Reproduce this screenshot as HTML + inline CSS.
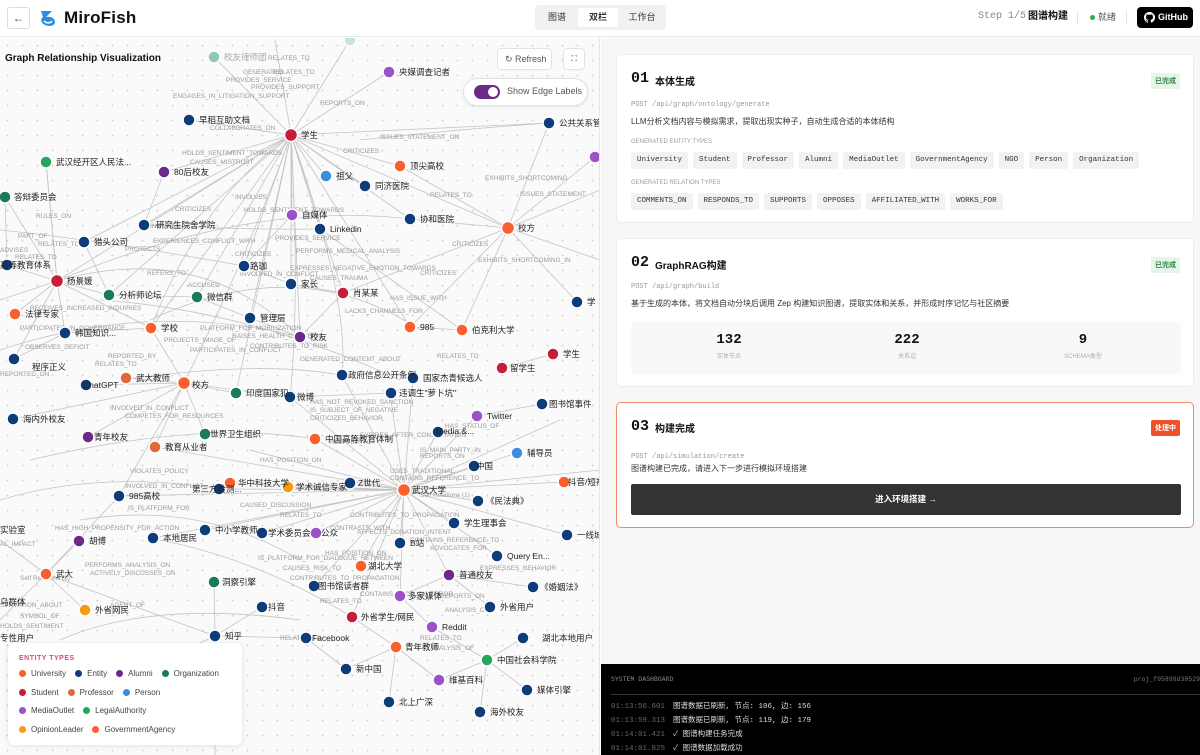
<!DOCTYPE html>
<html><head><meta charset="utf-8">
<style>
*{box-sizing:border-box;margin:0;padding:0}
body{width:1200px;height:755px;overflow:hidden;font-family:"Liberation Sans","Noto Sans CJK SC",sans-serif;background:#fff;color:#111;position:relative}
.hdr{position:absolute;left:0;top:0;width:1200px;height:37px;border-bottom:1px solid #e8e8e8;background:#fff}
.back{position:absolute;left:7px;top:7px;width:23px;height:22px;border:1px solid #ddd;border-radius:3px;font-size:12px;color:#555;text-align:center;line-height:20px}
.logo{position:absolute;left:38px;top:8px}
.brand{position:absolute;left:64px;top:8px;font-size:17px;font-weight:bold;letter-spacing:.2px}
.tabs{position:absolute;left:535px;top:5px;width:131px;height:25px;background:#f1f1f1;border-radius:4px;font-size:9px}
.tabs span{position:absolute;top:3px;height:19px;line-height:19px;text-align:center;width:40px;color:#333}
.tabs .on{background:#fff;border-radius:3px;font-weight:bold}
.step{position:absolute;left:978px;top:10px;line-height:14px;font-family:"Liberation Mono",monospace;font-size:10px;color:#888}
.stepb{position:absolute;left:1028px;top:10px;line-height:14px;font-size:10px;font-weight:bold}
.sep{position:absolute;top:11px;width:1px;height:14px;background:#e3e3e3}
.dot{position:absolute;left:1090px;top:15px;width:5px;height:5px;border-radius:50%;background:#2eaa52}
.ready{position:absolute;left:1098px;top:10px;line-height:14px;font-size:9px;color:#555}
.gh{position:absolute;left:1137px;top:7px;width:56px;height:21px;background:#000;border-radius:4px;color:#fff;font-size:9px;font-weight:bold;line-height:21px;padding-left:21px}
.left{position:absolute;left:0;top:38px;width:600px;height:717px;background-color:#fafafa;background-image:radial-gradient(#d4d4d4 0.8px,transparent 1px);background-size:15px 15px;overflow:hidden;border-right:1px solid #e5e5e5}
.right{position:absolute;left:601px;top:38px;width:599px;height:717px;background:#f7f7f7}
.card{position:absolute;left:15px;width:578px;background:#fff;border:1px solid #ececec;border-radius:5px}
.num{position:absolute;left:14px;font-family:"Liberation Mono",monospace;font-size:15px;font-weight:bold}
.ttl{position:absolute;left:38px;font-size:10px;font-weight:bold}
.badge{position:absolute;right:13px;font-size:7px;padding:3px 4px;border-radius:2px;font-weight:bold}
.api{position:absolute;left:14px;font-family:"Liberation Mono",monospace;font-size:7px;color:#999}
.desc{position:absolute;left:14px;font-size:8px;color:#333}
.sub{position:absolute;left:14px;font-size:6px;color:#999}
.chips{position:absolute;left:14px;display:flex;gap:5px}
.chips span{background:#f2f2f2;border-radius:2px;font-family:"Liberation Mono",monospace;font-size:7.5px;color:#333;padding:4px 6px;height:17px}
.stats{position:absolute;left:14px;top:83px;width:550px;height:52px;background:#f8f8f8;border-radius:3px}
.st{position:absolute;top:10px;width:100px;text-align:center}
.st b{display:block;font-family:"Liberation Mono",monospace;font-size:14px}
.st i{display:block;font-style:normal;font-size:6px;color:#aaa;margin-top:3px}
.dash{position:absolute;left:0;top:626px;width:599px;height:91px;background:#000;color:#ddd;font-family:"Liberation Mono","Noto Sans CJK SC",monospace}
.ln{position:absolute;left:10px;font-size:7.5px}
.ln em{font-style:normal;color:#666;margin-right:8px}
.gtitle{position:absolute;left:5px;top:15px;font-size:10px;font-weight:bold}
.btn{position:absolute;background:#fff;border:1px solid #e2e2e2;border-radius:4px;font-size:9px;color:#555}
.legend{position:absolute;left:8px;top:605px;width:234px;height:102px;background:#fff;border-radius:6px;box-shadow:0 1px 6px rgba(0,0,0,.1);font-size:8px;color:#444}
.legend .h{position:absolute;left:11px;top:12px;font-size:7px;font-weight:bold;color:#e0457b;letter-spacing:.5px}
.lr{position:absolute;left:11px;display:flex;gap:9px}
.lr span:before{content:"";display:inline-block;width:7px;height:7px;border-radius:50%;background:var(--c);margin-right:5px;vertical-align:-1px}
svg text{font-family:"Liberation Sans","Noto Sans CJK SC",sans-serif}
</style></head><body>
<div class="hdr">
<div class="back">←</div>
<svg class="logo" width="20" height="20" viewBox="0 0 20 20"><path d="M3 3 L14 3 L8 9 C12 8 17 10 17 14 C17 18 11 19 7 17 C3 15 2 11 5 9 L3 3Z" fill="#2a8de0"/><path d="M6 13 C9 16 13 15 14 13" stroke="#fff" stroke-width="1.5" fill="none"/></svg>
<div class="brand">MiroFish</div>
<div class="tabs"><span style="left:2px">图谱</span><span class="on" style="left:43px">双栏</span><span style="left:85px;width:44px">工作台</span></div>
<div class="step">Step 1/5</div><div class="stepb">图谱构建</div>
<div class="sep" style="left:1077px"></div><div class="dot"></div><div class="ready">就绪</div>
<div class="sep" style="left:1126px"></div>
<div class="gh"><svg style="position:absolute;left:7px;top:5px" width="11" height="11" viewBox="0 0 16 16"><path fill="#fff" d="M8 0C3.6 0 0 3.6 0 8c0 3.5 2.3 6.5 5.5 7.6.4.1.5-.2.5-.4v-1.4c-2.2.5-2.7-1-2.7-1-.4-.9-.9-1.200-.9-1.200-.7-.5.1-.5.1-.5.8.1 1.2.8 1.2.8.7 1.2 1.9.9 2.3.7.1-.5.3-.9.5-1.1-1.8-.2-3.6-.9-3.6-4 0-.9.3-1.600.8-2.100-.1-.2-.4-1 .1-2.1 0 0 .7-.2 2.2.8.6-.2 1.3-.3 2-.3s1.4.1 2 .3c1.5-1 2.2-.8 2.2-.8.4 1.1.2 1.9.1 2.1.5.6.8 1.3.8 2.1 0 3.1-1.9 3.7-3.6 3.9.3.3.5.8.5 1.5v2.2c0 .2.1.5.6.4C13.7 14.5 16 11.5 16 8c0-4.4-3.6-8-8-8z"/></svg>GitHub</div>
</div>

<div class="left">
<svg width="600" height="717" viewBox="0 38 600 717" style="position:absolute;left:0;top:0">
<g stroke="#c4c4c4" stroke-width="0.8" fill="none">
<path d="M291 135 L214 57 M291 135 L275 40 M291 135 L350 40 M291 135 L389 72 M291 135 L189 120 M291 135 L164 172 M291 135 L326 176 M291 135 L400 166 M291 135 L365 186 M291 135 L292 215 M291 135 L320 229 M291 135 L144 225 M291 135 L244 266 M291 135 L291 284 M291 135 L343 293 M291 135 L410 219 M291 135 L508 228 M291 135 L549 123 M291 135 L197 297 M291 135 L250 318 M291 135 L300 337 M291 135 L84 242 M291 135 L410 327 M291 135 L57 281 M291 135 L109 295 M291 135 L151 328"/>
<path d="M404 490 L315 439 M404 490 L438 432 M404 490 L474 466 M404 490 L517 453 M404 490 L478 501 M404 490 L454 523 M404 490 L400 543 M404 490 L361 566 M404 490 L316 533 M404 490 L262 533 M404 490 L350 483 M404 490 L288 487 M404 490 L230 483 M404 490 L219 489 M404 490 L205 530 M404 490 L497 556 M404 490 L449 575 M404 490 L314 586 M404 490 L390 393 M404 490 L477 416 M404 490 L342 375 M404 490 L413 378 M404 490 L290 397 M404 490 L564 482 M404 490 L567 535 M404 490 L400 596 M404 490 L352 617 M404 490 L153 538 M404 490 L119 496 M404 490 L155 447 M404 490 L600 470 M404 490 L560 420 M404 490 L250 450"/>
<path d="M508 228 L400 166 M508 228 L410 219 M508 228 L600 190 M508 228 L595 157 M508 228 L549 123 M508 228 L462 330 M508 228 L343 293 M508 228 L600 260 M508 228 L577 302 M508 228 L410 327"/>
<path d="M57 281 L5 197 M57 281 L46 162 M57 281 L7 265 M57 281 L15 314 M57 281 L65 333 M57 281 L109 295 M57 281 L151 328 M57 281 L14 359 M57 281 L0 300 M57 281 Q200 240 300 337 M57 281 Q250 200 410 219"/>
<path d="M184 383 L126 378 M184 383 L236 393 M184 383 L86 385 M184 383 L205 434 M184 383 L151 328 M184 383 L88 437 M184 383 L13 419 M184 383 L290 397 M184 383 L155 447 M184 383 L119 496"/>
<path d="M46 574 L0 540 M46 574 L85 610 M46 574 L79 541 M46 574 L0 620 M46 574 L119 496 M46 574 L215 636 M215 636 L262 607 M215 636 L306 638 M215 636 L214 582 M215 636 L120 680 M215 636 L215 755 M306 638 L346 669 M396 647 L439 680 M396 647 L352 617 M396 647 L389 702 M396 647 L346 669 M487 660 L523 638 M487 660 L527 690 M487 660 L480 712 M487 660 L432 627 M487 660 L439 680 M449 575 L533 587 M449 575 L490 607 M449 575 L400 596 M432 627 L400 596"/>
<path d="M150 320 Q300 250 420 330 M100 300 Q250 310 400 380 M0 350 Q150 300 300 337 M120 380 Q260 360 340 375 M30 460 Q200 420 315 439 M80 520 Q200 500 300 560 M0 500 Q100 470 220 489 M60 640 Q150 600 300 620 M140 225 Q250 230 320 229 M0 230 Q100 240 244 266 M360 140 Q450 130 549 123 M320 229 Q420 300 462 330 M160 540 Q260 560 352 617 M410 327 L462 330 M502 368 L553 354 M542 404 L477 416 M290 397 L391 393 M250 318 L300 337 M197 297 L250 318 M109 295 L197 297 M65 333 L14 359 M65 333 L151 328 M300 337 L343 293 M244 266 L291 284 M291 284 L343 293 M292 215 L244 266 M164 172 L144 225 M84 242 L109 295 M5 197 L7 265 M46 162 L57 281"/>
<path d="M291 135 Q200 200 150 330 M291 135 Q250 250 184 383 M291 135 Q300 300 290 397 M291 135 Q350 300 342 375 M291 135 L236 393"/>
</g>
<g fill="#9a9a9a" font-size="6.5">
<text x="268" y="60">RELATES_TO</text><text x="243" y="74">GENERATED</text><text x="273" y="74">RELATES_TO</text><text x="226" y="82">PROVIDES_SERVICE</text><text x="251" y="89">PROVIDES_SUPPORT</text><text x="173" y="98">ENGAGES_IN_LITIGATION_SUPPORT</text><text x="320" y="105">REPORTS_ON</text><text x="210" y="130">COLLABORATES_ON</text><text x="182" y="155">HOLDS_SENTIMENT_TOWARDS</text><text x="190" y="164">CAUSES_MISTRUST</text><text x="343" y="153">CRITICIZES</text><text x="380" y="139">ISSUES_STATEMENT_ON</text><text x="235" y="199">INVOLVES</text><text x="175" y="211">CRITICIZES</text><text x="244" y="212">HOLDS_SENTIMENT_TOWARDS</text><text x="150" y="228">INITIATES</text><text x="153" y="243">EXPERIENCES_CONFLICT_WITH</text><text x="125" y="251">PROTECTS</text><text x="235" y="256">CRITICIZES</text><text x="275" y="240">PROVIDES_SERVICE</text><text x="296" y="253">PERFORMS_MEDICAL_ANALYSIS</text><text x="290" y="270">EXPRESSES_NEGATIVE_EMOTION_TOWARDS</text><text x="310" y="280">CAUSES_TRAUMA</text><text x="240" y="276">INVOLVED_IN_CONFLICT</text><text x="147" y="275">REFERS_TO</text><text x="188" y="287">ACCUSED</text><text x="36" y="218">RULES_ON</text><text x="18" y="238">PART_OF</text><text x="38" y="246">RELATES_TO</text><text x="0" y="252">ADVISES</text><text x="15" y="259">RELATES_TO</text><text x="30" y="310">RECEIVES_INCREASED_INQUIRIES</text><text x="20" y="330">PARTICIPATES_IN_GOVERNANCE</text><text x="25" y="349">OBSERVES_DEFICIT</text><text x="108" y="358">REPORTED_BY</text><text x="95" y="366">RELATES_TO</text><text x="0" y="376">REPORTED_ON</text><text x="164" y="342">PROJECTS_IMAGE_OF</text><text x="190" y="352">PARTICIPATES_IN_CONFLICT</text><text x="250" y="348">CONTRIBUTES_TO_RISK</text><text x="200" y="330">PLATFORM_FOR_MOBILIZATION</text><text x="232" y="338">RAISES_HEALTH_CONCERN</text><text x="300" y="361">GENERATED_CONTENT_ABOUT</text><text x="345" y="313">LACKS_CHANNELS_FOR</text><text x="390" y="300">HAS_ISSUE_WITH</text><text x="437" y="358">RELATES_TO</text><text x="420" y="275">CRITICIZES</text><text x="478" y="262">EXHIBITS_SHORTCOMING_IN</text><text x="452" y="246">CRITICIZES</text><text x="520" y="196">ISSUES_STATEMENT</text><text x="485" y="180">EXHIBITS_SHORTCOMING</text><text x="430" y="197">RELATES_TO</text><text x="110" y="410">INVOLVED_IN_CONFLICT</text><text x="125" y="418">COMPETES_FOR_RESOURCES</text><text x="310" y="412">IS_SUBJECT_OF_NEGATIVE</text><text x="310" y="404">HAS_NOT_REVOKED_SANCTION</text><text x="310" y="420">CRITICIZES_BEHAVIOR</text><text x="330" y="444">RELATES_TO</text><text x="360" y="437">EXPIRES_AFTER_CONSULTATION</text><text x="260" y="462">HAS_POSITION_ON</text><text x="420" y="452">IS_MAIN_PARTY_IN</text><text x="420" y="458">REPORTS_ON</text><text x="390" y="473">USES_TRADITIONAL</text><text x="390" y="480">CONTAINS_REFERENCE_TO</text><text x="130" y="473">VIOLATES_POLICY</text><text x="125" y="488">INVOLVED_IN_CONFLICT</text><text x="128" y="510">IS_PLATFORM_FOR</text><text x="280" y="517">RELATES_TO</text><text x="350" y="517">CONTRIBUTES_TO_PROPAGATION</text><text x="330" y="530">CONTRASTS_WITH</text><text x="357" y="534">AFFECTS_DONATION_INTENT</text><text x="410" y="542">CONTAINS_REFERENCE_TO</text><text x="430" y="550">ADVOCATES_FOR</text><text x="325" y="555">HAS_POSITION_ON</text><text x="258" y="560">IS_PLATFORM_FOR_DIALOGUE_BETWEEN</text><text x="283" y="570">CAUSES_RISK_TO</text><text x="290" y="580">CONTRIBUTES_TO_PROPAGATION</text><text x="55" y="530">HAS_HIGH_PROPENSITY_FOR_ACTION</text><text x="0" y="546">AL_IMPACT</text><text x="85" y="567">PERFORMS_ANALYSIS_ON</text><text x="90" y="575">ACTIVELY_DISCUSSES_ON</text><text x="0" y="607">SERVATION_ABOUT</text><text x="110" y="607">AGENT_OF</text><text x="20" y="618">SYMBOL_OF</text><text x="0" y="628">HOLDS_SENTIMENT</text><text x="320" y="603">RELATES_TO</text><text x="440" y="598">REPORTS_ON</text><text x="445" y="612">ANALYSIS_OF</text><text x="280" y="640">RELATES_TO</text><text x="420" y="640">RELATES_TO</text><text x="430" y="650">ANALYSIS_OF</text><text x="480" y="570">EXPRESSES_BEHAVIOR</text><text x="360" y="596">CONTAINS_FACTUAL_ERROR</text><text x="20" y="580">Self Relations (2)</text><text x="420" y="497">Self Relations (1)</text><text x="240" y="507">CAUSED_DISCUSSION</text><text x="445" y="428">HAS_STATUS_OF</text>
</g>
<g stroke="#fff" stroke-width="1.5">
<circle cx="214" cy="57" r="6" fill="#8fc9b3"/><circle cx="350" cy="40" r="6" fill="#c8e3d8"/>
<circle cx="389" cy="72" r="6" fill="#9b51c8"/><circle cx="189" cy="120" r="6" fill="#0d3d78"/><circle cx="291" cy="135" r="6.5" fill="#c41e3a"/><circle cx="549" cy="123" r="6" fill="#0d3d78"/><circle cx="46" cy="162" r="6" fill="#27a55a"/><circle cx="164" cy="172" r="6" fill="#6b2a8a"/><circle cx="326" cy="176" r="6" fill="#3a8fdc"/><circle cx="400" cy="166" r="6" fill="#fa5f2e"/><circle cx="365" cy="186" r="6" fill="#0d3d78"/><circle cx="5" cy="197" r="6" fill="#1a7a5c"/><circle cx="595" cy="157" r="6" fill="#9b51c8"/><circle cx="292" cy="215" r="6" fill="#9b51c8"/><circle cx="410" cy="219" r="6" fill="#0d3d78"/><circle cx="508" cy="228" r="6.5" fill="#fa5f2e"/><circle cx="320" cy="229" r="6" fill="#0d3d78"/><circle cx="144" cy="225" r="6" fill="#0d3d78"/><circle cx="84" cy="242" r="6" fill="#0d3d78"/><circle cx="7" cy="265" r="6" fill="#0d3d78"/><circle cx="57" cy="281" r="6.5" fill="#c41e3a"/><circle cx="244" cy="266" r="6" fill="#0d3d78"/><circle cx="291" cy="284" r="6" fill="#0d3d78"/><circle cx="343" cy="293" r="6" fill="#c41e3a"/><circle cx="109" cy="295" r="6" fill="#1a7a5c"/><circle cx="197" cy="297" r="6" fill="#1a7a5c"/><circle cx="250" cy="318" r="6" fill="#0d3d78"/><circle cx="15" cy="314" r="6" fill="#fa5f2e"/><circle cx="65" cy="333" r="6" fill="#0d3d78"/><circle cx="151" cy="328" r="6" fill="#fa5f2e"/><circle cx="300" cy="337" r="6" fill="#6b2a8a"/><circle cx="410" cy="327" r="6" fill="#fa5f2e"/><circle cx="462" cy="330" r="6" fill="#fa5f2e"/><circle cx="577" cy="302" r="6" fill="#0d3d78"/><circle cx="14" cy="359" r="6" fill="#0d3d78"/><circle cx="86" cy="385" r="6" fill="#0d3d78"/><circle cx="126" cy="378" r="6" fill="#e0683a"/><circle cx="184" cy="383" r="6.5" fill="#fa5f2e"/><circle cx="236" cy="393" r="6" fill="#1a7a5c"/><circle cx="290" cy="397" r="6" fill="#0d3d78"/><circle cx="342" cy="375" r="6" fill="#0d3d78"/><circle cx="413" cy="378" r="6" fill="#0d3d78"/><circle cx="502" cy="368" r="6" fill="#c41e3a"/><circle cx="553" cy="354" r="6" fill="#c41e3a"/><circle cx="391" cy="393" r="6" fill="#0d3d78"/><circle cx="13" cy="419" r="6" fill="#0d3d78"/><circle cx="477" cy="416" r="6" fill="#9b51c8"/><circle cx="542" cy="404" r="6" fill="#0d3d78"/><circle cx="88" cy="437" r="6" fill="#6b2a8a"/><circle cx="205" cy="434" r="6" fill="#1a7a5c"/><circle cx="315" cy="439" r="6" fill="#fa5f2e"/><circle cx="438" cy="432" r="6" fill="#0d3d78"/><circle cx="155" cy="447" r="6" fill="#e0683a"/><circle cx="517" cy="453" r="6" fill="#3a8fdc"/><circle cx="474" cy="466" r="6" fill="#0d3d78"/><circle cx="564" cy="482" r="6" fill="#fa5f2e"/><circle cx="404" cy="490" r="6.5" fill="#fa5f2e"/><circle cx="230" cy="483" r="6" fill="#fa5f2e"/><circle cx="288" cy="487" r="6" fill="#f39c12"/><circle cx="350" cy="483" r="6" fill="#0d3d78"/><circle cx="219" cy="489" r="6" fill="#0d3d78"/><circle cx="119" cy="496" r="6" fill="#0d3d78"/><circle cx="478" cy="501" r="6" fill="#0d3d78"/><circle cx="454" cy="523" r="6" fill="#0d3d78"/><circle cx="205" cy="530" r="6" fill="#0d3d78"/><circle cx="262" cy="533" r="6" fill="#0d3d78"/><circle cx="316" cy="533" r="6" fill="#9b51c8"/><circle cx="153" cy="538" r="6" fill="#0d3d78"/><circle cx="400" cy="543" r="6" fill="#0d3d78"/><circle cx="79" cy="541" r="6" fill="#6b2a8a"/><circle cx="497" cy="556" r="6" fill="#0d3d78"/><circle cx="567" cy="535" r="6" fill="#0d3d78"/><circle cx="46" cy="574" r="6" fill="#fa5f2e"/><circle cx="361" cy="566" r="6" fill="#fa5f2e"/><circle cx="449" cy="575" r="6" fill="#6b2a8a"/><circle cx="214" cy="582" r="6" fill="#1a7a5c"/><circle cx="314" cy="586" r="6" fill="#0d3d78"/><circle cx="533" cy="587" r="6" fill="#0d3d78"/><circle cx="85" cy="610" r="6" fill="#f39c12"/><circle cx="400" cy="596" r="6" fill="#9b51c8"/><circle cx="352" cy="617" r="6" fill="#c41e3a"/><circle cx="262" cy="607" r="6" fill="#0d3d78"/><circle cx="490" cy="607" r="6" fill="#0d3d78"/><circle cx="432" cy="627" r="6" fill="#9b51c8"/><circle cx="523" cy="638" r="6" fill="#0d3d78"/><circle cx="215" cy="636" r="6" fill="#0d3d78"/><circle cx="306" cy="638" r="6" fill="#0d3d78"/><circle cx="396" cy="647" r="6" fill="#fa5f2e"/><circle cx="487" cy="660" r="6" fill="#27a55a"/><circle cx="346" cy="669" r="6" fill="#0d3d78"/><circle cx="439" cy="680" r="6" fill="#9b51c8"/><circle cx="527" cy="690" r="6" fill="#0d3d78"/><circle cx="389" cy="702" r="6" fill="#0d3d78"/><circle cx="480" cy="712" r="6" fill="#0d3d78"/>
</g>
<g fill="#222" font-size="8.5">
<text x="224" y="60" fill="#aaa">校友律师团</text><text x="399" y="75">央媒调查记者</text><text x="199" y="123">早稻互助文档</text><text x="301" y="138">学生</text><text x="559" y="126">公共关系管理</text><text x="56" y="165">武汉经开区人民法...</text><text x="174" y="175">80后校友</text><text x="336" y="179">祖父</text><text x="410" y="169">顶尖高校</text><text x="375" y="189">同济医院</text><text x="14" y="200">答辩委员会</text><text x="302" y="218">自媒体</text><text x="420" y="222">协和医院</text><text x="518" y="231">校方</text><text x="330" y="232">Linkedin</text><text x="156" y="228">研究生院舍学院</text><text x="94" y="245">猎头公司</text><text x="0" y="268">高等教育体系</text><text x="67" y="284">杨景媛</text><text x="250" y="269">路珈</text><text x="301" y="287">家长</text><text x="353" y="296">肖某某</text><text x="119" y="298">分析师论坛</text><text x="207" y="300">微信群</text><text x="260" y="321">管理层</text><text x="25" y="317">法律专家</text><text x="75" y="336">韩国知识...</text><text x="161" y="331">学校</text><text x="310" y="340">校友</text><text x="420" y="330">985</text><text x="472" y="333">伯克利大学</text><text x="587" y="305">学</text><text x="32" y="370">程序正义</text><text x="83" y="388">ChatGPT</text><text x="136" y="381">武大教师</text><text x="192" y="388">校方</text><text x="246" y="396">印度国家犯...</text><text x="297" y="400">微博</text><text x="348" y="378">政府信息公开条例</text><text x="423" y="381">国家杰青候选人</text><text x="510" y="371">留学生</text><text x="563" y="357">学生</text><text x="399" y="396">违调生"萝卜坑"</text><text x="23" y="422">海内外校友</text><text x="487" y="419">Twitter</text><text x="549" y="407">图书馆事件</text><text x="94" y="440">青年校友</text><text x="210" y="437">世界卫生组织</text><text x="325" y="442">中国高等教育体制</text><text x="436" y="434">Media &amp;...</text><text x="165" y="450">教育从业者</text><text x="527" y="456">辅导员</text><text x="476" y="469">中国</text><text x="568" y="485">抖音/短视</text><text x="412" y="493">武汉大学</text><text x="238" y="486">华中科技大学</text><text x="296" y="490">学术诚信专家</text><text x="358" y="486">Z世代</text><text x="192" y="492">第三方检测...</text><text x="129" y="499">985高校</text><text x="486" y="504">《民法典》</text><text x="464" y="526">学生理事会</text><text x="215" y="533">中小学教师</text><text x="268" y="536">学术委员会</text><text x="321" y="536">公众</text><text x="163" y="541">本地居民</text><text x="410" y="546">B站</text><text x="89" y="544">胡博</text><text x="507" y="559">Query En...</text><text x="577" y="538">一线城市</text><text x="56" y="577">武大</text><text x="368" y="569">湖北大学</text><text x="459" y="578">普通校友</text><text x="222" y="585">洞察引擎</text><text x="318" y="589">图书馆读者群</text><text x="540" y="590">《婚姻法》</text><text x="95" y="613">外省网民</text><text x="408" y="599">多家媒体</text><text x="361" y="620">外省学生/网民</text><text x="268" y="610">抖音</text><text x="500" y="610">外省用户</text><text x="442" y="630">Reddit</text><text x="542" y="641">湖北本地用户</text><text x="225" y="639">知乎</text><text x="312" y="641">Facebook</text><text x="405" y="650">青年教师</text><text x="497" y="663">中国社会科学院</text><text x="356" y="672">新中国</text><text x="449" y="683">维基百科</text><text x="537" y="693">媒体引擎</text><text x="399" y="705">北上广深</text><text x="490" y="715">海外校友</text><text x="0" y="533">实验室</text><text x="0" y="605">乌群体</text><text x="0" y="641">专性用户</text>
</g>
</svg>
<div class="gtitle">Graph Relationship Visualization</div>
<div class="btn" style="left:497px;top:10px;width:55px;height:22px;line-height:20px;padding-left:7px">↻ Refresh</div>
<div class="btn" style="left:563px;top:10px;width:22px;height:22px;line-height:20px;text-align:center;font-size:8px">⛶</div>
<div class="btn" style="left:463px;top:40px;width:125px;height:28px;border-radius:14px;box-shadow:0 1px 4px rgba(0,0,0,.08)"><div style="position:absolute;left:10px;top:6px;width:26px;height:14px;border-radius:7px;background:#6b2a8a"><div style="position:absolute;right:2px;top:2px;width:10px;height:10px;border-radius:50%;background:#fff"></div></div><span style="position:absolute;left:43px;top:7px">Show Edge Labels</span></div>
<div class="legend"><div class="h">ENTITY TYPES</div>
<div class="lr" style="top:26px"><span style="--c:#fa5f2e">University</span><span style="--c:#0d3d78">Entity</span><span style="--c:#6b2a8a">Alumni</span><span style="--c:#1a7a5c">Organization</span></div>
<div class="lr" style="top:45px"><span style="--c:#c41e3a">Student</span><span style="--c:#e0683a">Professor</span><span style="--c:#3a8fdc">Person</span></div>
<div class="lr" style="top:63px"><span style="--c:#9b51c8">MediaOutlet</span><span style="--c:#27a55a">LegalAuthority</span></div>
<div class="lr" style="top:82px"><span style="--c:#f39c12">OpinionLeader</span><span style="--c:#fa5f2e">GovernmentAgency</span></div>
</div>
</div>

<div class="right">
<div class="card" style="top:16px;height:169px">
<div class="num" style="top:15px">01</div><div class="ttl" style="top:18px">本体生成</div>
<div class="badge" style="top:18px;background:#e6f5e9;color:#2e8a44">已完成</div>
<div class="api" style="top:46px">POST /api/graph/ontology/generate</div>
<div class="desc" style="top:61px">LLM分析文档内容与模拟需求，提取出现实种子，自动生成合适的本体结构</div>
<div class="sub" style="top:84px">GENERATED ENTITY TYPES</div>
<div class="chips" style="top:97px"><span>University</span><span>Student</span><span>Professor</span><span>Alumni</span><span>MediaOutlet</span><span>GovernmentAgency</span><span>NGO</span><span>Person</span><span>Organization</span></div>
<div class="sub" style="top:125px">GENERATED RELATION TYPES</div>
<div class="chips" style="top:138px"><span>COMMENTS_ON</span><span>RESPONDS_TO</span><span>SUPPORTS</span><span>OPPOSES</span><span>AFFILIATED_WITH</span><span>WORKS_FOR</span></div>
</div>
<div class="card" style="top:200px;height:149px">
<div class="num" style="top:15px">02</div><div class="ttl" style="top:18px">GraphRAG构建</div>
<div class="badge" style="top:18px;background:#e6f5e9;color:#2e8a44">已完成</div>
<div class="api" style="top:44px">POST /api/graph/build</div>
<div class="desc" style="top:59px">基于生成的本体，将文档自动分块后调用 Zep 构建知识图谱，提取实体和关系，并形成时序记忆与社区摘要</div>
<div class="stats"><div class="st" style="left:48px"><b>132</b><i>实体节点</i></div><div class="st" style="left:226px"><b>222</b><i>关系边</i></div><div class="st" style="left:402px"><b>9</b><i>SCHEMA类型</i></div></div>
</div>
<div class="card" style="top:364px;height:126px;border:1px solid #f08a6e">
<div class="num" style="top:15px">03</div><div class="ttl" style="top:17px">构建完成</div>
<div class="badge" style="top:17px;background:#f0502a;color:#fff">处理中</div>
<div class="api" style="top:50px">POST /api/simulation/create</div>
<div class="desc" style="top:60px">图谱构建已完成，请进入下一步进行模拟环境搭建</div>
<div style="position:absolute;left:14px;top:81px;width:550px;height:31px;background:#333;border-radius:2px;color:#fff;font-size:8.5px;font-weight:bold;text-align:center;line-height:31px">进入环境搭建 →</div>
</div>
<div class="dash">
<div style="position:absolute;left:10px;top:12px;font-size:6.5px;color:#888">SYSTEM DASHBOARD</div>
<div style="position:absolute;right:0;top:12px;font-size:6.5px;color:#777">proj_f95898d38529</div>
<div style="position:absolute;left:10px;right:0;top:30px;height:1px;background:#333"></div>
<div class="ln" style="top:36px"><em>01:13:56.601</em>图谱数据已刷新, 节点: 106, 边: 156</div>
<div class="ln" style="top:50px"><em>01:13:59.313</em>图谱数据已刷新, 节点: 119, 边: 179</div>
<div class="ln" style="top:64px"><em>01:14:01.421</em>✓ 图谱构建任务完成</div>
<div class="ln" style="top:78px"><em>01:14:01.825</em>✓ 图谱数据加载成功</div>
</div>
</div>
</body></html>
